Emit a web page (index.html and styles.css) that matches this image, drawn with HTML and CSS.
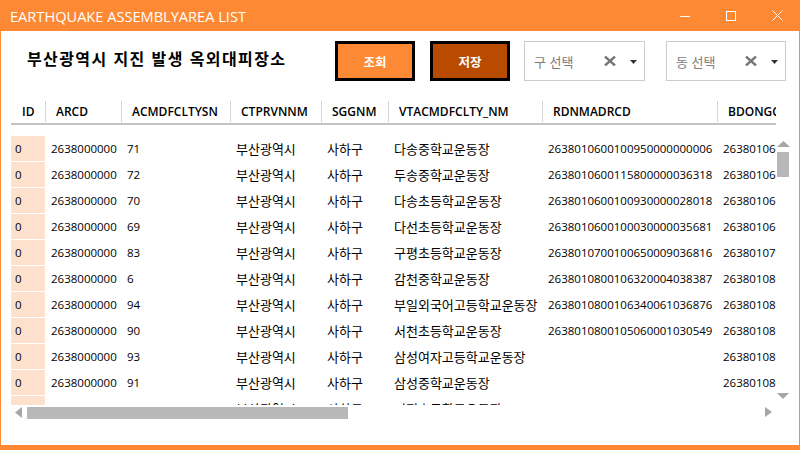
FILE: index.html
```html
<!DOCTYPE html>
<html lang="ko">
<head>
<meta charset="utf-8">
<title>EARTHQUAKE ASSEMBLYAREA LIST</title>
<link rel="stylesheet" href="styles.css">
</head>
<body>
<div class="window">
  <div class="titlebar">
    <span class="title">EARTHQUAKE ASSEMBLYAREA LIST</span>
    <div class="controls">
      <span class="ctl"><svg width="10" height="10" viewBox="0 0 10 10"><line x1="0" y1="5.5" x2="10" y2="5.5" stroke="#fff" stroke-width="1"/></svg></span>
      <span class="ctl"><svg width="10" height="10" viewBox="0 0 10 10"><rect x="0.5" y="0.5" width="9" height="9" fill="none" stroke="#fff" stroke-width="1"/></svg></span>
      <span class="ctl"><svg width="11" height="11" viewBox="0 0 11 11"><path d="M0.5 0.5 L10.5 10.5 M10.5 0.5 L0.5 10.5" stroke="#fff" stroke-width="1" fill="none"/></svg></span>
    </div>
  </div>
  <div class="client">
    <div class="toolbar">
      <h1 class="heading">부산광역시 지진 발생 옥외대피장소</h1>
      <div class="actions">
        <button class="btn btn-search">조회</button>
        <button class="btn btn-save">저장</button>
        <div class="combo combo-gu">
          <span class="combo-text">구 선택</span>
          <svg class="combo-x" width="12" height="10" viewBox="0 0 12 10"><path d="M1 0.5 L11 9.5 M11 0.5 L1 9.5" stroke="#777" stroke-width="2.4" fill="none"/></svg>
          <svg class="combo-arrow" width="7" height="4" viewBox="0 0 7 4"><polygon points="0,0 7,0 3.5,4" fill="#333"/></svg>
        </div>
        <div class="combo combo-dong">
          <span class="combo-text">동 선택</span>
          <svg class="combo-x" width="12" height="10" viewBox="0 0 12 10"><path d="M1 0.5 L11 9.5 M11 0.5 L1 9.5" stroke="#777" stroke-width="2.4" fill="none"/></svg>
          <svg class="combo-arrow" width="7" height="4" viewBox="0 0 7 4"><polygon points="0,0 7,0 3.5,4" fill="#333"/></svg>
        </div>
      </div>
    </div>

    <div class="grid">
      <div class="grid-header">
        <div class="hc c-id">ID</div>
        <div class="hc c-arcd">ARCD</div>
        <div class="hc c-sn">ACMDFCLTYSN</div>
        <div class="hc c-ctp">CTPRVNNM</div>
        <div class="hc c-sgg">SGGNM</div>
        <div class="hc c-nm">VTACMDFCLTY_NM</div>
        <div class="hc c-rdn">RDNMADRCD</div>
        <div class="hc c-bd">BDONGCD</div>
      </div>
      <div class="grid-body">
        <div class="rows">
          <div class="row"><div class="cell c-id">0</div><div class="cell c-arcd">2638000000</div><div class="cell c-sn">71</div><div class="cell c-ctp ko">부산광역시</div><div class="cell c-sgg ko">사하구</div><div class="cell c-nm ko">다송중학교운동장</div><div class="cell c-rdn">2638010600100950000000006</div><div class="cell c-bd">2638010600</div></div>
          <div class="row"><div class="cell c-id">0</div><div class="cell c-arcd">2638000000</div><div class="cell c-sn">72</div><div class="cell c-ctp ko">부산광역시</div><div class="cell c-sgg ko">사하구</div><div class="cell c-nm ko">두송중학교운동장</div><div class="cell c-rdn">2638010600115800000036318</div><div class="cell c-bd">2638010600</div></div>
          <div class="row"><div class="cell c-id">0</div><div class="cell c-arcd">2638000000</div><div class="cell c-sn">70</div><div class="cell c-ctp ko">부산광역시</div><div class="cell c-sgg ko">사하구</div><div class="cell c-nm ko">다송초등학교운동장</div><div class="cell c-rdn">2638010600100930000028018</div><div class="cell c-bd">2638010600</div></div>
          <div class="row"><div class="cell c-id">0</div><div class="cell c-arcd">2638000000</div><div class="cell c-sn">69</div><div class="cell c-ctp ko">부산광역시</div><div class="cell c-sgg ko">사하구</div><div class="cell c-nm ko">다선초등학교운동장</div><div class="cell c-rdn">2638010600100030000035681</div><div class="cell c-bd">2638010600</div></div>
          <div class="row"><div class="cell c-id">0</div><div class="cell c-arcd">2638000000</div><div class="cell c-sn">83</div><div class="cell c-ctp ko">부산광역시</div><div class="cell c-sgg ko">사하구</div><div class="cell c-nm ko">구평초등학교운동장</div><div class="cell c-rdn">2638010700100650009036816</div><div class="cell c-bd">2638010700</div></div>
          <div class="row"><div class="cell c-id">0</div><div class="cell c-arcd">2638000000</div><div class="cell c-sn">6</div><div class="cell c-ctp ko">부산광역시</div><div class="cell c-sgg ko">사하구</div><div class="cell c-nm ko">감천중학교운동장</div><div class="cell c-rdn">2638010800106320004038387</div><div class="cell c-bd">2638010800</div></div>
          <div class="row"><div class="cell c-id">0</div><div class="cell c-arcd">2638000000</div><div class="cell c-sn">94</div><div class="cell c-ctp ko">부산광역시</div><div class="cell c-sgg ko">사하구</div><div class="cell c-nm ko">부일외국어고등학교운동장</div><div class="cell c-rdn">2638010800106340061036876</div><div class="cell c-bd">2638010800</div></div>
          <div class="row"><div class="cell c-id">0</div><div class="cell c-arcd">2638000000</div><div class="cell c-sn">90</div><div class="cell c-ctp ko">부산광역시</div><div class="cell c-sgg ko">사하구</div><div class="cell c-nm ko">서천초등학교운동장</div><div class="cell c-rdn">2638010800105060001030549</div><div class="cell c-bd">2638010800</div></div>
          <div class="row"><div class="cell c-id">0</div><div class="cell c-arcd">2638000000</div><div class="cell c-sn">93</div><div class="cell c-ctp ko">부산광역시</div><div class="cell c-sgg ko">사하구</div><div class="cell c-nm ko">삼성여자고등학교운동장</div><div class="cell c-rdn"></div><div class="cell c-bd">2638010800</div></div>
          <div class="row"><div class="cell c-id">0</div><div class="cell c-arcd">2638000000</div><div class="cell c-sn">91</div><div class="cell c-ctp ko">부산광역시</div><div class="cell c-sgg ko">사하구</div><div class="cell c-nm ko">삼성중학교운동장</div><div class="cell c-rdn"></div><div class="cell c-bd">2638010800</div></div>
          <div class="row"><div class="cell c-id">0</div><div class="cell c-arcd">2638000000</div><div class="cell c-sn">92</div><div class="cell c-ctp ko">부산광역시</div><div class="cell c-sgg ko">사하구</div><div class="cell c-nm ko">괴정초등학교운동장</div><div class="cell c-rdn"></div><div class="cell c-bd">2638010800</div></div>
        </div>
        <div class="vscroll">
          <svg class="arr-up" width="13" height="6" viewBox="0 0 13 6"><polygon points="0,6 13,6 6.5,0" fill="#a6a6a6"/></svg>
          <div class="vthumb"></div>
          <div class="spacer"></div>
          <svg class="arr-down" width="12" height="6" viewBox="0 0 12 6"><polygon points="0,0 12,0 6,6" fill="#a6a6a6"/></svg>
        </div>
      </div>
      <div class="hscroll">
        <svg class="arr-left" width="7" height="11" viewBox="0 0 7 11"><polygon points="7,0 7,11 0,5.5" fill="#a6a6a6"/></svg>
        <div class="hthumb"></div>
        <svg class="arr-right" width="7" height="10" viewBox="0 0 7 10"><polygon points="0,0 0,10 7,5" fill="#a6a6a6"/></svg>
      </div>
    </div>
  </div>
</div>
</body>
</html>
```

FILE: styles.css
```css
* { box-sizing: border-box; }

html, body {
  margin: 0;
  padding: 0;
}

body {
  width: 800px;
  height: 450px;
  overflow: hidden;
  font-family: "Open Sans", "Noto Sans CJK KR", sans-serif;
  color: #000;
}

.window {
  width: 800px;
  height: 450px;
  background: #fd8934;
  display: flex;
  flex-direction: column;
}

.titlebar {
  height: 31px;
  flex: none;
  display: flex;
  align-items: center;
  padding-left: 10px;
}

.title {
  color: #fff;
  font-family: "Open Sans", sans-serif;
  font-size: 14.6px;
  line-height: 1;
  margin-top: 2px;
  white-space: nowrap;
}

.controls {
  margin-left: auto;
  display: flex;
  height: 31px;
}

.ctl {
  width: 46px;
  display: flex;
  align-items: center;
  justify-content: center;
}

.client {
  flex: 1;
  margin: 0 1px 5px 1px;
  background: #fff;
  display: flex;
  flex-direction: column;
}

.toolbar {
  display: flex;
  align-items: center;
  height: 40px;
  margin-top: 10px;
  padding-right: 13px;
}

.heading {
  margin: 0 0 7px 26px;
  font-family: "Noto Sans CJK KR", sans-serif;
  font-weight: 700;
  font-size: 16px;
  letter-spacing: 1.4px;
  line-height: 1;
  white-space: nowrap;
}

.actions {
  margin-left: auto;
  display: flex;
  align-items: center;
}

.btn {
  width: 80px;
  height: 40px;
  border: 3px solid #000;
  color: #fff;
  font-family: "Noto Sans CJK KR", sans-serif;
  font-weight: 700;
  font-size: 12.5px;
  padding: 0;
  margin: 0;
}

.btn-search { background: #fd8934; }
.btn-save { background: #b94b00; margin-left: 15px; }

.combo {
  height: 40px;
  border: 1px solid #cccccc;
  display: flex;
  align-items: center;
  padding-left: 9px;
}

.combo-gu { width: 121px; margin-left: 14px; }
.combo-dong { width: 120px; margin-left: 21px; }

.combo-text {
  font-family: "Noto Sans CJK KR", sans-serif;
  font-size: 13px;
  color: #7d7d7d;
  line-height: 1;
}

.combo-x { margin-left: auto; }
.combo-arrow { margin: 1px 7px 0 14px; }

.grid {
  margin: 19px 0 0 10px;
  display: flex;
  flex-direction: column;
}

.grid-header {
  display: flex;
  width: 765px;
  height: 25px;
  overflow: hidden;
  border-bottom: 2px solid #c3c3c3;
  font-weight: 600;
  font-size: 12px;
  white-space: nowrap;
}

.hc {
  flex: none;
  height: 21px;
  margin-top: 1px;
  padding-left: 10px;
  border-left: 1px solid #d4d4d4;
  display: flex;
  align-items: center;
}

.hc.c-id { border-left: none; padding-left: 11px; }

.c-id { width: 34px; }
.c-arcd { width: 76px; }
.c-sn { width: 109px; }
.c-ctp { width: 91px; }
.c-sgg { width: 67px; }
.c-nm { width: 154px; }
.c-rdn { width: 175px; }
.c-bd { width: 100px; }

.grid-body {
  display: flex;
  margin-top: 11px;
}

.rows {
  width: 765px;
  height: 269px;
  overflow: hidden;
  flex: none;
}

.row {
  display: flex;
  height: 25px;
  margin-bottom: 1px;
  font-size: 11.5px;
  white-space: nowrap;
}

.cell {
  flex: none;
  padding-left: 6px;
  display: flex;
  align-items: center;
  overflow: hidden;
}

.cell.ko {
  font-family: "Noto Sans CJK KR", sans-serif;
  font-size: 13px;
}

.cell.c-id {
  background: #fde1cc;
  padding-left: 4px;
}

.vscroll {
  width: 13px;
  margin-left: 1px;
  display: flex;
  flex-direction: column;
  padding: 5px 0 6px 0;
}

.arr-up { display: block; flex: none; }

.vthumb {
  width: 12px;
  height: 25px;
  margin-top: 5px;
  background: #b8b8b8;
}

.spacer { flex: 1; }

.arr-down { display: block; flex: none; }

.hscroll {
  width: 765px;
  height: 13px;
  margin-top: 1px;
  display: flex;
  align-items: center;
  padding: 0 4px;
}

.arr-left { display: block; }

.hthumb {
  width: 321px;
  height: 12px;
  margin-left: 5px;
  background: #b8b8b8;
}

.arr-right { display: block; margin-left: auto; margin-top: -2px; }
```
